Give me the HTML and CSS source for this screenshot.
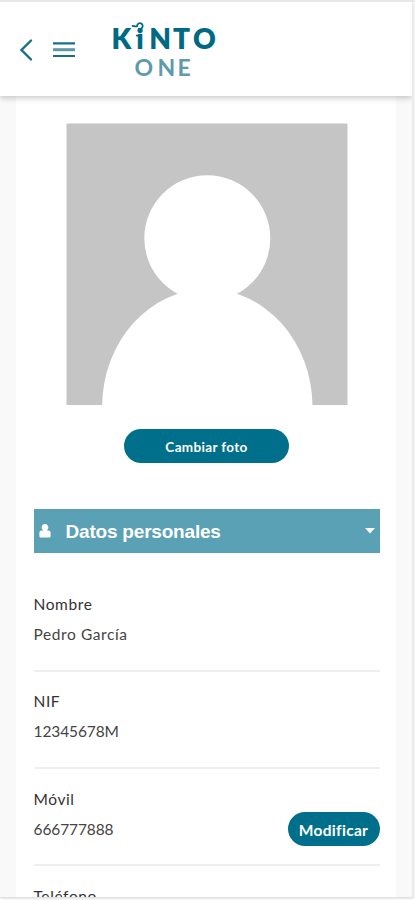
FILE: index.html
```html
<!DOCTYPE html>
<html lang="es">
<head>
<meta charset="utf-8">
<meta name="viewport" content="width=device-width, initial-scale=1">
<title>KINTO ONE</title>
<link rel="stylesheet" href="styles.css">
</head>
<body>
<div class="screen">
  <header class="topbar">
    <svg class="back" width="14" height="24" viewBox="0 0 14 24"><path d="M12 2.5 2.5 12 12 21.5"/></svg>
    <svg class="menu" width="22" height="18" viewBox="0 0 22 18"><path d="M0 2.3h22M0 15h22"/><path class="mid" d="M0 8.7h22"/></svg>
    <svg class="logo" width="108" height="60" viewBox="0 0 108 60">
      <text class="kinto" y="29" x="0.6 25.2 38.2 62 82">KiNTO</text>
      <path class="curl" d="M21.5 5.8c2 .3 3 1.2 4.8.4M26.2 5.5c.3-2 2.2-2.8 3.7-2.2 1.8.7 2.3 2.8 1.2 4.4-.8 1.1-2.1 1.4-3.2 1M25.8 15.6h3"/>
      <text class="one" y="55.8" x="23.6 46.4 66.4">ONE</text>
    </svg>
  </header>
  <main class="card">
    <svg class="photo" width="282" height="282" viewBox="0 0 282 282">
      <path class="photo-bg" d="M.5 .5h281v281.500H.5z"/>
      <circle cx="141.3" cy="115.3" r="63"/>
      <ellipse cx="141.3" cy="284" rx="105.200" ry="118"/>
    </svg>
    <button class="pill change">Cambiar foto</button>
    <section class="panel">
      <h2 class="panel-head">
        <svg class="user" width="12" height="14" viewBox="0 0 12 14"><path d="M6 0a3.4 3.4 0 0 1 2.4 5.8l-.4.6h1.2A2.5 2.5 0 0 1 11.6 9v3.2a1.2 1.2 0 0 1-1.2 1.2H1.6a1.2 1.2 0 0 1-1.2-1.2V9a2.5 2.5 0 0 1 2.4-2.6H4l-.4-.6A3.4 3.4 0 0 1 6 0z"/></svg>
        <span class="panel-title">Datos personales</span>
        <svg class="caret" width="10" height="6" viewBox="0 0 10 6"><path d="M0 0h10L5 5.5z"/></svg>
      </h2>
      <dl class="fields">
        <div class="row"><div><dt>Nombre</dt><dd>Pedro García</dd></div></div>
        <div class="row"><div><dt>NIF</dt><dd class="digits">12345678M</dd></div></div>
        <div class="row"><div><dt>Móvil</dt><dd class="digits">666777888</dd></div><button class="pill edit">Modificar</button></div>
        <div class="row"><div><dt>Teléfono</dt></div></div>
      </dl>
    </section>
  </main>
</div>
</body>
</html>
```
FILE: styles.css
```css
* { box-sizing: border-box; }
body {
  margin: 0;
  height: 900px;
  overflow: hidden;
  background: #fff;
  border-top: 2px solid #e8e8e8;
  font-family: Lato, sans-serif;
}
.screen {
  width: 413px;
  height: 896px;
  overflow: hidden;
  background: #f9f9f9;
  border-right: 1px solid #e9e9e9;
  border-bottom: 1px solid #e0e0e0;
  box-shadow: 1px 1px 2px #e4e4e4;
}
.topbar {
  position: relative;
  display: flex;
  height: 94px;
  background: #fff;
  box-shadow: 0 2px 6px rgba(0, 0, 0, .22);
}
.topbar svg { flex: none; fill: none; }
.back { margin: 36px 0 0 19px; stroke: #176f89; stroke-width: 2.4; stroke-linecap: round; }
.menu { margin: 39px 0 0 20px; stroke: #176f89; stroke-width: 2.2; }
.menu .mid { stroke: #5c98a8; stroke-width: 3; }
.logo { margin: 18px 0 0 36px; }
.logo .kinto { font-size: 28px; font-weight: 800; fill: #006a85; }
.logo .one { font-size: 23px; font-weight: 700; fill: #6099aa; }
.curl { stroke: #006a85; stroke-width: 1.8; stroke-linecap: round; }
.card {
  display: flex;
  flex-direction: column;
  align-items: center;
  width: 380px;
  height: 900px;
  margin-left: 16px;
  padding: 27.5px 16.5px 0 17.5px;
  background: #fff;
}
.photo { display: block; flex: none; margin-top: -.5px; fill: #fff; }
.photo-bg { fill: #c5c5c5; }
.pill {
  border: 0;
  border-radius: 17px;
  height: 34px;
  padding: 0;
  background: #006f8b;
  color: #fff;
  font-family: Lato, sans-serif;
  font-weight: 700;
}
.change { flex: none; width: 165px; margin-top: 23.5px; padding-top: 2px; font-size: 13.5px; letter-spacing: .35px; }
.edit { width: 92px; margin: 27.5px 0 0; padding-top: 1px; font-size: 15.5px; letter-spacing: .3px; }
.panel { width: 100%; margin-top: 46.5px; }
.panel-head {
  display: flex;
  align-items: center;
  height: 44px;
  margin: 0;
  padding: 0 5px 0 5px;
  background: #5aa1b5;
  color: #fff;
  fill: #fff;
}
.panel-title {
  flex: 1;
  margin-left: 15px;
  padding-top: 2px;
  font: 700 19px/24px "Liberation Sans", Arial, sans-serif;
  letter-spacing: -.2px;
}
.fields { margin: 21.2px 0 0; }
.row {
  display: flex;
  justify-content: space-between;
  align-items: flex-start;
  height: 97.4px;
  padding-top: 15.8px;
  border-bottom: 2px solid #eee;
}
dt, dd { margin: 0; font-size: 15.5px; line-height: 29.8px; letter-spacing: .6px; color: #444; }
dt { color: #333; }
.digits { letter-spacing: -.1px; }
```
